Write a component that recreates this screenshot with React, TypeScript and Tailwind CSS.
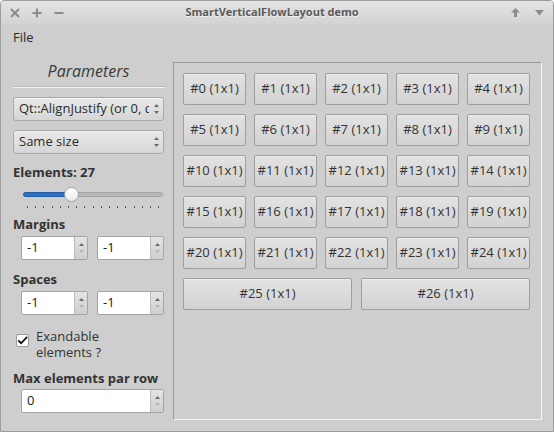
import React from "react";

const SpinArrows = ({ downLight = true }: { downLight?: boolean }) => (
  <svg width="7" height="16" viewBox="0 0 7 16">
    <path d="M3.5 3 L6 6 L1 6 Z" fill="#6a6a6a" />
    <path d="M3.5 13 L6 10 L1 10 Z" fill={downLight ? "#b4b4b4" : "#6a6a6a"} />
  </svg>
);

const Spin = ({ value, w }: { value: string; w: string }) => (
  <div className={`${w} h-[24px] flex bg-white border border-[#a4a4a4] rounded-[2px] overflow-hidden`}>
    <div className="flex-1 flex items-center pl-[5px] text-[13px] text-[#222]">{value}</div>
    <div className="w-[13px] border-l border-[#bcbcbc] bg-gradient-to-b from-[#e4e4e4] to-[#cfcfcf] flex items-center justify-center">
      <SpinArrows />
    </div>
  </div>
);

const Combo = ({ text }: { text: string }) => (
  <div className="w-[151px] h-[24px] flex items-center border border-[#a8a8a8] rounded-[3px] bg-gradient-to-b from-[#e9e9e9] to-[#d6d6d6] shadow-[inset_0_1px_0_#f4f4f4]">
    <div className="flex-1 overflow-hidden whitespace-nowrap pl-[5px] text-[13px] text-[#2a2a2a]">{text}</div>
    <div className="w-[14px] flex items-center justify-center">
      <SpinArrows downLight={false} />
    </div>
  </div>
);

const Btn = ({ label, cls }: { label: string; cls: string }) => (
  <div className={`${cls} h-[32px] flex items-center justify-center border border-[#9e9e9e] rounded-[2px] bg-gradient-to-b from-[#e3e3e3] to-[#d2d2d2] shadow-[inset_0_1px_0_#eeeeee] text-[13px] text-[#333] whitespace-nowrap`}>
    {label}
  </div>
);

export default function App() {
  const rows: number[][] = [];
  for (let r = 0; r < 5; r++) rows.push([0, 1, 2, 3, 4].map((c) => r * 5 + c));
  const ticks = Array.from({ length: 17 }, (_, i) => i);
  return (
    <div className="w-[554px] h-[432px] bg-[#cecece] font-['Open_Sans',sans-serif] border border-[#9c9c9c] rounded-t-[4px] overflow-hidden flex flex-col">
      {/* title bar */}
      <div className="h-[23px] shrink-0 bg-gradient-to-b from-[#e4e4e4] to-[#d3d3d3] flex items-center relative">
        <div className="flex items-center pl-[8px] gap-[10px] text-[#8a8a8a]">
          <svg width="12" height="12" viewBox="0 0 12 12"><path d="M2 2 L10 10 M10 2 L2 10" stroke="#8c8c8c" strokeWidth="2" /></svg>
          <svg width="12" height="12" viewBox="0 0 12 12"><path d="M6 1.5 V10.5 M1.5 6 H10.5" stroke="#8c8c8c" strokeWidth="2" /></svg>
          <svg width="12" height="12" viewBox="0 0 12 12"><path d="M1.5 6 H10.5" stroke="#8c8c8c" strokeWidth="2" /></svg>
        </div>
        <div className="absolute left-0 right-[10px] top-0 h-[23px] flex items-center justify-center text-[11px] font-bold text-[#5a5a5a] [text-shadow:0_1px_0_#f2f2f2] pointer-events-none">
          SmartVerticalFlowLayout demo
        </div>
        <div className="ml-auto flex items-center gap-[13px] pr-[8px]">
          <svg width="11" height="11" viewBox="0 0 11 11"><path d="M5.5 1 L10 5.5 H7 V10 H4 V5.5 H1 Z" fill="#8c8c8c" /></svg>
          <svg width="11" height="11" viewBox="0 0 11 11"><path d="M1 3 H10 L5.5 8.5 Z" fill="#8c8c8c" /></svg>
        </div>
      </div>
      {/* menu */}
      <div className="h-[27px] shrink-0 flex items-center pl-[12px] text-[13px] text-[#2a2a2a]">File</div>
      {/* main */}
      <div className="flex pl-[12px]">
        {/* left */}
        <div className="w-[151px] flex flex-col">
          <div className="mt-[10px] h-[20px] flex items-center justify-center italic text-[16px] text-[#3a3a3a]">Parameters</div>
          <div className="mt-[5px] ml-[0px] h-[2px] border-t border-[#b8b8b8] bg-[#f4f4f4] w-[152px]"></div>
          <div className="mt-[9px]"><Combo text="Qt::AlignJustify (or 0, default)" /></div>
          <div className="mt-[9px]"><Combo text="Same size" /></div>
          <div className="mt-[10px] h-[18px] flex items-center text-[13px] font-bold text-[#333]">Elements: 27</div>
          {/* slider */}
          <div className="relative mt-[1px] h-[28px] ml-[10px] w-[141px]">
            <div className="absolute left-0 top-[9px] w-[140px] h-[5px] rounded-full bg-[#b9b9b9] border border-[#a6a6a6]"></div>
            <div className="absolute left-0 top-[9px] w-[48px] h-[5px] rounded-l-full bg-[#2e6fc4] border border-[#245da8]"></div>
            <div className="absolute left-[41px] top-[4px] w-[15px] h-[15px] rounded-full bg-gradient-to-b from-[#ffffff] to-[#ececec] border border-[#a0a0a0]"></div>
            {ticks.map((i) => (
              <div key={i} className="absolute top-[23px] w-[1px] h-[2px] bg-[#555]" style={{ left: 4 + i * 8.2 }}></div>
            ))}
          </div>
          <div className="mt-[5px] h-[18px] flex items-center text-[13px] font-bold text-[#333]">Margins</div>
          <div className="mt-[2px] flex ml-[8px] gap-[9px]">
            <Spin value="-1" w="w-[67px]" />
            <Spin value="-1" w="w-[67px]" />
          </div>
          <div className="mt-[11px] h-[18px] flex items-center text-[13px] font-bold text-[#333]">Spaces</div>
          <div className="mt-[2px] flex ml-[8px] gap-[9px]">
            <Spin value="-1" w="w-[67px]" />
            <Spin value="-1" w="w-[67px]" />
          </div>
          <div className="mt-[13px] flex ml-[3px]">
            <div className="mt-[6px] w-[13px] h-[13px] bg-white border border-[#9a9a9a] rounded-[2px] flex items-center justify-center">
              <svg width="12" height="11" viewBox="0 0 12 11"><path d="M1.5 5.5 L4.5 8.5 L11 1.5" stroke="#111" strokeWidth="2" fill="none" /></svg>
            </div>
            <div className="ml-[7px] flex flex-col text-[13px] text-[#333]">
              <div className="h-[16px] leading-[16px]">Exandable</div>
              <div className="h-[16px] leading-[16px]">elements ?</div>
            </div>
          </div>
          <div className="mt-[10px] h-[18px] flex items-center text-[13px] font-bold text-[#333] whitespace-nowrap">Max elements par row</div>
          <div className="mt-[1px] ml-[8px]">
            <Spin value="0" w="w-[143px]" />
          </div>
        </div>
        {/* right frame */}
        <div className="ml-[9px] mt-[11px] w-[369px] h-[358px] border-t border-l border-[#9a9a9a] border-r border-b border-r-[#f6f6f6] border-b-[#f6f6f6] pl-[9px] pt-[10px]">
          <div className="flex flex-col gap-[9px] w-[347px]">
            {rows.map((row, ri) => (
              <div key={ri} className="flex gap-[8px]">
                {row.map((n) => (
                  <Btn key={n} label={`#${n} (1x1)`} cls="w-[63px]" />
                ))}
              </div>
            ))}
            <div className="flex gap-[9px]">
              <Btn label="#25 (1x1)" cls="w-[169px]" />
              <Btn label="#26 (1x1)" cls="w-[169px]" />
            </div>
          </div>
        </div>
      </div>
    </div>
  );
}
